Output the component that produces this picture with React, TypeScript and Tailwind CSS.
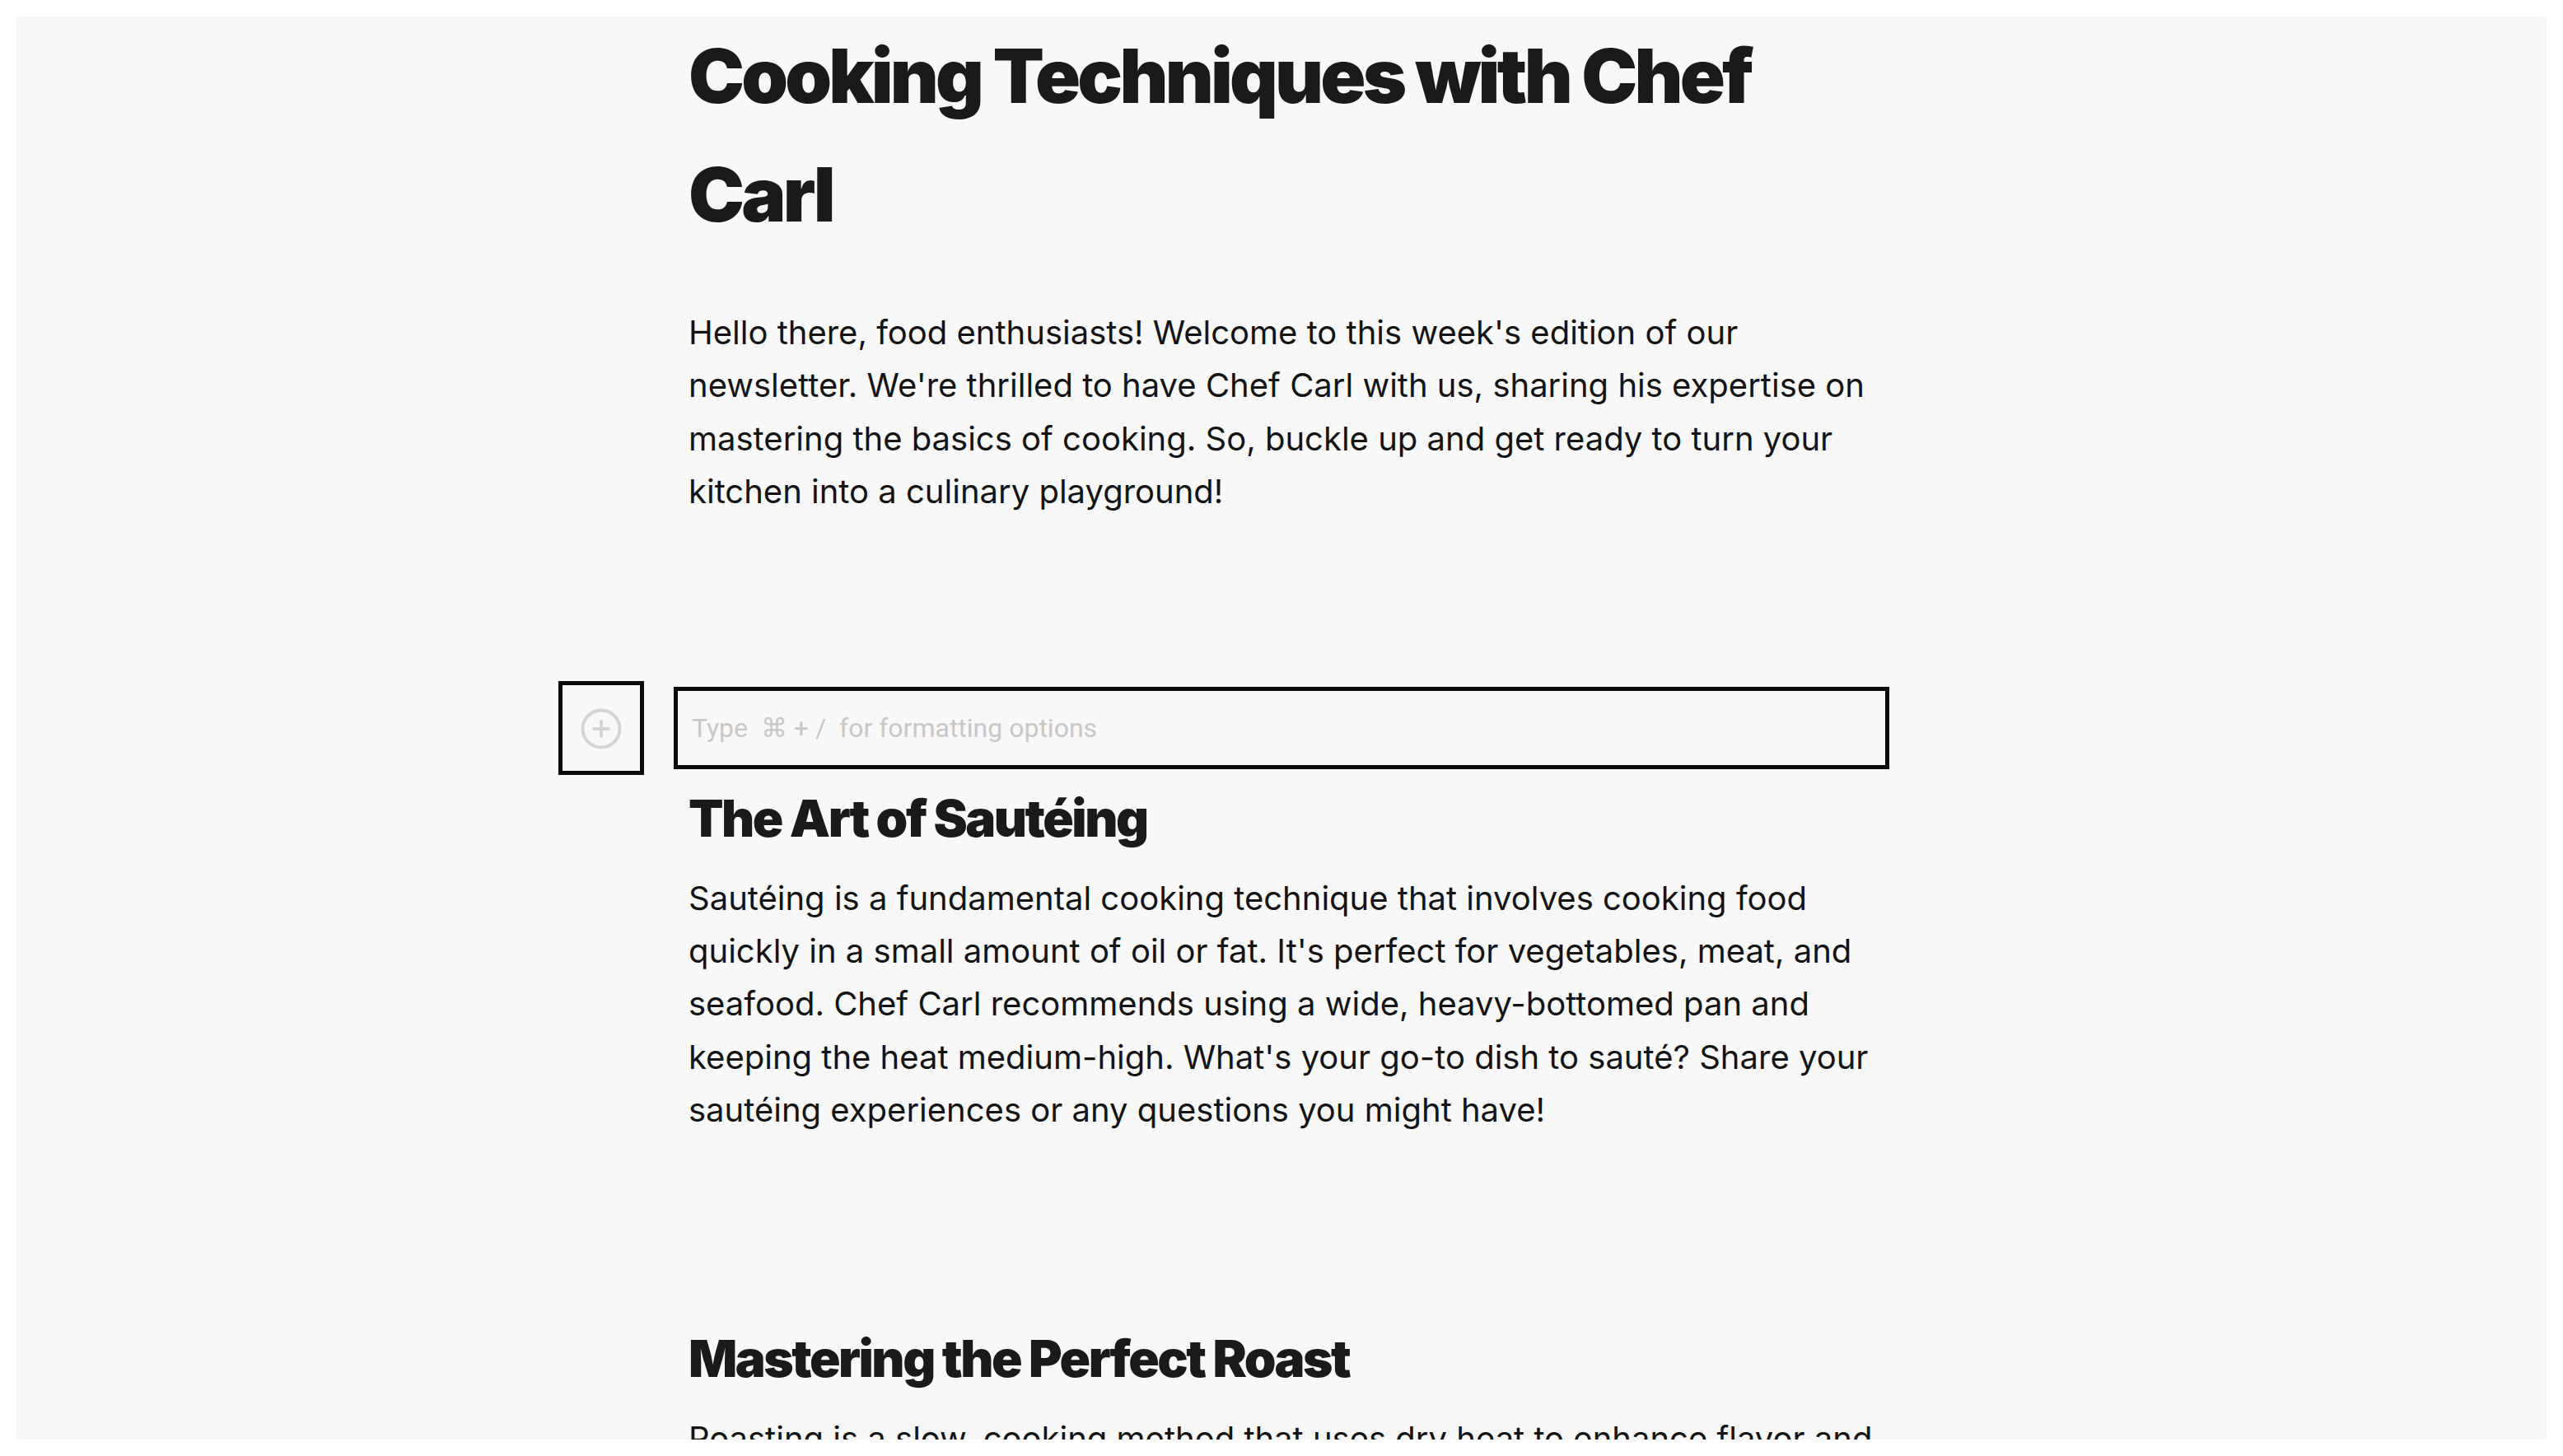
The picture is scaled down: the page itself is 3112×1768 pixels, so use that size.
import { CirclePlus } from 'lucide-react';

const App = () => {
  return (
    <div className="h-screen overflow-hidden bg-white p-[20px] font-['Inter',sans-serif]">
      <div className="h-full overflow-hidden bg-[#f8f8f8] pl-[658px] pr-[798px]">
        <div className="pl-[158px] pr-[16px]">
          <h1 className="text-[91px] leading-[144px] font-black tracking-[-0.042em] text-[#1a1a1a]">
            Cooking Techniques with Chef Carl
          </h1>
          <p className="mt-[64px] text-[40px] leading-[64.4px] text-[#141414]">
            Hello there, food enthusiasts! Welcome to this week's edition of our newsletter. We're thrilled to have Chef Carl with us, sharing his expertise on mastering the basics of cooking. So, buckle up and get ready to turn your kitchen into a culinary playground!
          </p>
        </div>

        {/* Empty block with add button */}
        <div className="mt-[197px] flex items-center gap-[36px]">
          <button className="flex h-[114px] w-[104px] shrink-0 items-center justify-center border-[5px] border-[#0a0a0a] pt-[2px]">
            <CirclePlus size={54} strokeWidth={1.7} className="text-[#d4d4d4]" />
          </button>
          <div className="flex h-[100px] flex-1 items-center border-[5px] border-[#0a0a0a] px-[17px] font-['Roboto',sans-serif] text-[32px] text-[#c8c8c8]">
            Type&nbsp;&nbsp;⌘ + /&nbsp;&nbsp;for formatting options
          </div>
        </div>

        <div className="pl-[158px] pr-[16px]">
          <h2 className="mt-[8px] text-[62px] leading-[90px] font-black tracking-[-0.04em] text-[#1a1a1a]">
            The Art of Sautéing
          </h2>
          <p className="mt-[20px] text-[40px] leading-[64.4px] text-[#141414]">
            Sautéing is a fundamental cooking technique that involves cooking food quickly in a small amount of oil or fat. It's perfect for vegetables, meat, and seafood. Chef Carl recommends using a wide, heavy-bottomed pan and keeping the heat medium-high. What's your go-to dish to sauté? Share your sautéing experiences or any questions you might have!
          </p>
          <h2 className="mt-[224px] text-[62px] leading-[90px] font-black tracking-[-0.04em] text-[#1a1a1a]">
            Mastering the Perfect Roast
          </h2>
          <p className="mt-[20px] text-[40px] leading-[64.4px] text-[#141414]">
            Roasting is a slow, cooking method that uses dry heat to enhance flavor and
          </p>
        </div>
      </div>
    </div>
  );
};

export default App;
